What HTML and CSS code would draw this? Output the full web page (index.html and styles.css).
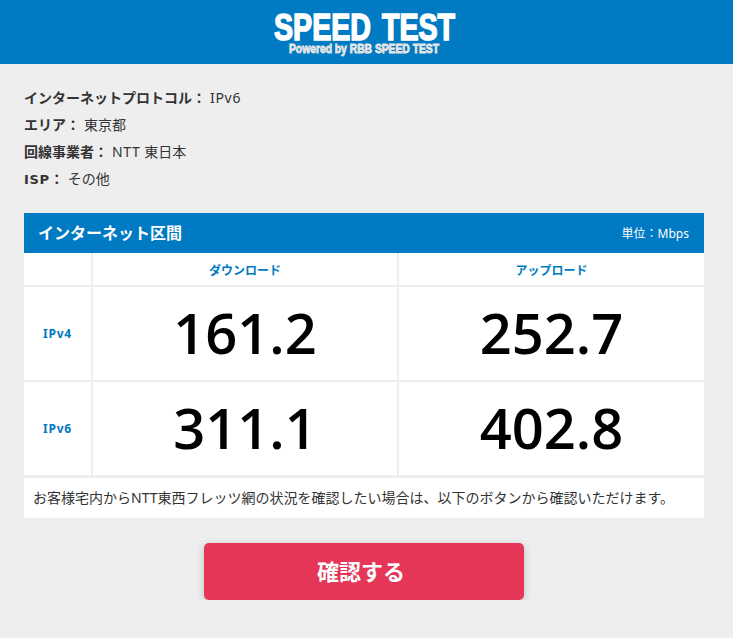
FILE: index.html
```html
<!DOCTYPE html>
<html lang="ja">
<head>
    <meta charset="UTF-8">
    <meta name="viewport" content="width=device-width, initial-scale=1.0">
    <title>SPEED TEST</title>
    <link rel="stylesheet" href="styles.css">
</head>
<body>
    <header class="header">
        <svg class="logo" width="190" height="57" viewBox="0 0 190 57">
            <text class="logo-title" x="2" y="40" textLength="181" lengthAdjust="spacingAndGlyphs">SPEED TEST</text>
            <text class="logo-sub" x="17" y="53" textLength="150" lengthAdjust="spacingAndGlyphs">Powered by RBB SPEED TEST</text>
        </svg>
    </header>

    <main class="main">
        <dl class="info">
            <div class="info-row"><dt>インターネットプロトコル：</dt><dd class="latin">IPv6</dd></div>
            <div class="info-row"><dt>エリア：</dt><dd>東京都</dd></div>
            <div class="info-row"><dt>回線事業者：</dt><dd><span class="latin">NTT</span> 東日本</dd></div>
            <div class="info-row"><dt><span class="latin-bold">ISP</span>：</dt><dd>その他</dd></div>
        </dl>

        <div class="result-head">
            <h2>インターネット区間</h2>
            <p class="unit">単位：Mbps</p>
        </div>
        <table class="result">
            <thead>
                <tr>
                    <th></th>
                    <th class="download">ダウンロード</th>
                    <th>アップロード</th>
                </tr>
            </thead>
            <tbody>
                <tr>
                    <th>IPv4</th>
                    <td>161.2</td>
                    <td>252.7</td>
                </tr>
                <tr>
                    <th>IPv6</th>
                    <td>311.1</td>
                    <td>402.8</td>
                </tr>
            </tbody>
        </table>
        <p class="note">お客様宅内からNTT東西フレッツ網の状況を確認したい場合は、以下のボタンから確認いただけます。</p>

        <button class="button" type="button">確認する</button>
    </main>
</body>
</html>
```
FILE: styles.css
```css
* {
    box-sizing: border-box;
}

body {
    margin: 0;
    background-color: #eee;
    color: #333;
    font-family: "Noto Sans", "Noto Sans CJK JP", sans-serif;
    font-size: 14px;
}

.header {
    height: 64px;
    background-color: #007ac2;
}

.logo {
    display: block;
    margin: 0 auto;
    overflow: visible;
}

.logo-title {
    fill: #fff;
    stroke: #fff;
    stroke-width: 1.6px;
    font: bold 37px "Liberation Sans Narrow", "Liberation Sans", sans-serif;
    word-spacing: 4px;
}

.logo-sub {
    fill: #e6e6e6;
    stroke: #e6e6e6;
    stroke-width: 0.8px;
    font: bold 12px "Liberation Sans Narrow", "Liberation Sans", sans-serif;
}

.main {
    width: 680px;
    margin-left: 24px;
    padding-top: 20px;
}

.info {
    margin: 0 0 21px;
}

.info-row {
    display: flex;
    gap: 4px;
    height: 27px;
    line-height: 27px;
}

.info dt {
    font-weight: bold;
}

.info dd {
    margin: 0;
}

.latin {
    letter-spacing: 0.7px;
}

.latin-bold {
    font-family: "DejaVu Sans", sans-serif;
    font-size: 13px;
    letter-spacing: 0.7px;
}

.result-head {
    display: flex;
    justify-content: space-between;
    align-items: center;
    height: 40px;
    padding: 0 15px 0 14px;
    background-color: #007ac2;
    color: #fff;
}

.result-head h2 {
    margin: 0;
    padding-bottom: 3px;
    font-size: 16px;
}

.unit {
    margin: 0;
    font-size: 12px;
}

.result {
    width: 100%;
    table-layout: fixed;
    border-collapse: separate;
    border-spacing: 0;
}

.result th,
.result td {
    height: 95px;
    padding: 0;
    border-bottom: 2px solid #eee;
    border-left: 2px solid #eee;
    background-color: #fff;
    text-align: center;
}

.result th {
    color: #007ac2;
    font-size: 12px;
}

.result thead th {
    height: 34px;
    padding-top: 2px;
}

.result tbody th {
    letter-spacing: 0.8px;
}

.result tr > :first-child {
    width: 67px;
    border-left: none;
}

.result .download {
    width: 306px;
}

.result td {
    padding-bottom: 3px;
    color: #000;
    font-family: "Open Sans", sans-serif;
    font-size: 56px;
    font-weight: 650;
    line-height: 1;
}

.note {
    height: 41px;
    margin: 0;
    padding: 0 9px;
    border-top: 1px solid #eee;
    background-color: #fff;
    line-height: 40px;
    white-space: nowrap;
}

.button {
    display: block;
    width: 320px;
    height: 57px;
    margin: 25px auto 0;
    padding: 0 6px 4px 0;
    border: none;
    border-radius: 5px;
    background-color: #e53657;
    box-shadow: 0 2px 8px rgba(0, 0, 0, 0.2);
    color: #fff;
    font-family: inherit;
    font-size: 22px;
    font-weight: bold;
    cursor: pointer;
}
```
